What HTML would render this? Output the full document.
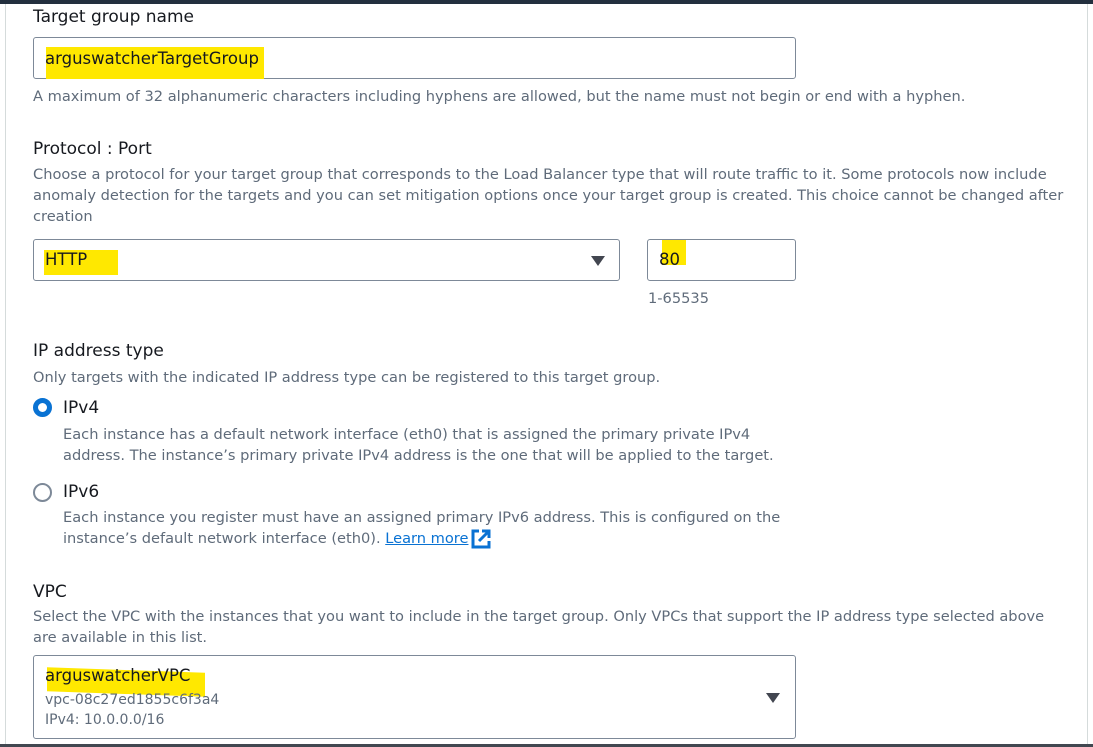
<!DOCTYPE html>
<html><head><meta charset="utf-8"><style>
*{margin:0;padding:0;box-sizing:border-box}
body{width:1093px;height:747px;background:#fff;position:relative;overflow:hidden;font-family:"DejaVu Sans",sans-serif;color:#16191f}
.a{position:absolute;white-space:nowrap}
.l{font-size:17px;color:#16191f}
.d{font-size:14.6px;color:#5f6b7a;line-height:21px}
.box{position:absolute;border:1px solid #7d8998;border-radius:3px;background:#fff}
.hl{background:#ffe800}
.tri{position:absolute;width:0;height:0;border-left:7px solid transparent;border-right:7px solid transparent;border-top:10px solid #424650}
</style></head><body>
<div class="a" style="left:0;top:0;width:1093px;height:4px;background:#232f3e"></div>
<div class="a" style="left:5px;top:4px;width:1px;height:740px;background:#d5dbdb"></div>
<div class="a" style="left:1087px;top:4px;width:1px;height:740px;background:#d5dbdb"></div>
<div class="a" style="left:0;top:744px;width:1093px;height:3px;background:#414750"></div>

<div class="a l" style="left:33px;top:7px">Target group name</div>
<div class="box" style="left:33px;top:37px;width:763px;height:42px"></div>
<div class="a hl" style="left:46px;top:47px;width:218px;height:32px"></div>
<div class="a" style="left:45px;top:49px;font-size:16.5px">arguswatcherTargetGroup</div>
<div class="a d" style="left:33px;top:86px">A maximum of 32 alphanumeric characters including hyphens are allowed, but the name must not begin or end with a hyphen.</div>

<div class="a l" style="left:33px;top:139px">Protocol : Port</div>
<div class="a d" style="left:33px;top:164px">Choose a protocol for your target group that corresponds to the Load Balancer type that will route traffic to it. Some protocols now include<br>anomaly detection for the targets and you can set mitigation options once your target group is created. This choice cannot be changed after<br>creation</div>
<div class="box" style="left:33px;top:239px;width:587px;height:42px"></div>
<div class="a hl" style="left:44px;top:250px;width:74px;height:25px"></div>
<div class="a" style="left:45px;top:250px;font-size:16.5px">HTTP</div>
<div class="tri" style="left:591px;top:256px"></div>
<div class="box" style="left:647px;top:239px;width:149px;height:42px"></div>
<div class="a hl" style="left:662px;top:240px;width:24px;height:25px"></div>
<div class="a" style="left:659px;top:250px;font-size:16.5px">80</div>
<div class="a d" style="left:648px;top:288px">1-65535</div>

<div class="a l" style="left:33px;top:341px">IP address type</div>
<div class="a d" style="left:33px;top:367px">Only targets with the indicated IP address type can be registered to this target group.</div>
<div class="a" style="left:33px;top:398px;width:19px;height:19px;border-radius:50%;border:5px solid #0972d3;background:#fff"></div>
<div class="a l" style="left:63px;top:398px">IPv4</div>
<div class="a d" style="left:63px;top:424px">Each instance has a default network interface (eth0) that is assigned the primary private IPv4<br>address. The instance’s primary private IPv4 address is the one that will be applied to the target.</div>
<div class="a" style="left:33px;top:483px;width:19px;height:19px;border-radius:50%;border:2px solid #7d8998"></div>
<div class="a l" style="left:63px;top:482px">IPv6</div>
<div class="a d" style="left:63px;top:507px">Each instance you register must have an assigned primary IPv6 address. This is configured on the<br>instance’s default network interface (eth0). <span style="color:#0972d3;text-decoration:underline">Learn more </span></div>
<svg class="a" style="left:471px;top:529px" width="20" height="20" viewBox="0 0 20 20"><path d="M8 2H2v16h16v-6" fill="none" stroke="#0972d3" stroke-width="3"/><path d="M11 2h7v7M18 2L8 12" fill="none" stroke="#0972d3" stroke-width="3"/></svg>

<div class="a l" style="left:33px;top:582px">VPC</div>
<div class="a d" style="left:33px;top:606px">Select the VPC with the instances that you want to include in the target group. Only VPCs that support the IP address type selected above<br>are available in this list.</div>
<div class="box" style="left:33px;top:655px;width:763px;height:84px"></div>
<div class="a hl" style="left:47px;top:670px;width:158px;height:24px;transform:skewY(2deg)"></div>
<div class="a" style="left:45px;top:666px;font-size:16.5px">arguswatcherVPC</div>
<div class="a" style="left:45px;top:692px;font-size:14px;color:#5f6b7a">vpc-08c27ed1855c6f3a4</div>
<div class="a" style="left:45px;top:712px;font-size:14px;color:#5f6b7a">IPv4: 10.0.0.0/16</div>
<div class="tri" style="left:766px;top:693px"></div>
</body></html>
